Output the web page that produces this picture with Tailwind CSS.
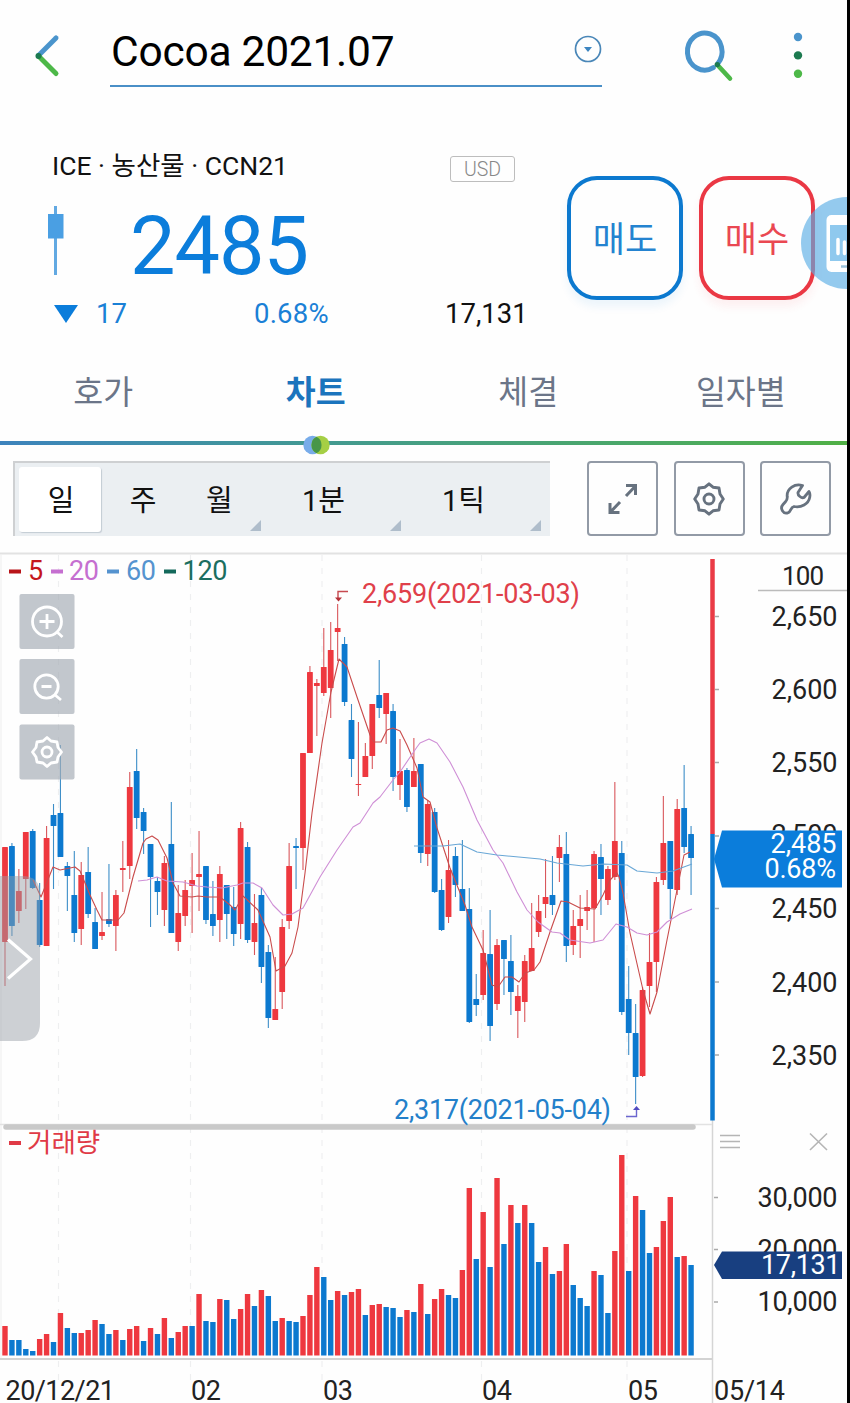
<!DOCTYPE html>
<html lang="ko">
<head>
<meta charset="utf-8">
<meta name="viewport" content="width=device-width, initial-scale=1">
<title>Cocoa 2021.07</title>
<script src="https://cdn.jsdelivr.net/npm/@tailwindcss/browser@4"></script>
</head>
<body class="bg-black">
<div class="relative flex h-[1403px] w-[847px] flex-col overflow-hidden bg-[#fefefe] font-['Roboto','Noto_Sans_CJK_KR',sans-serif] text-[#111]">

  <!-- Title bar -->
  <header class="flex h-[110px] shrink-0 items-start">
    <svg class="ml-[30px] mt-[30px] h-[50px] w-[36px]" viewBox="0 0 36 50" fill="none" stroke-width="5" stroke-linecap="round">
      <path d="M26 8 8.500 25.500" stroke="#4a94cc"/><path d="M8.500 26 26 43.500" stroke="#4db848"/><circle cx="8.500" cy="26" r="3" fill="#1c7a50"/>
    </svg>
    <div class="ml-[44px] flex h-[87px] w-[492px] items-start justify-between border-b-[2.500px] border-[#4a8fc7]">
      <h1 class="mt-[27px] ml-[1px] text-[42.500px] leading-[50px] tracking-[-0.250px] whitespace-nowrap text-black">Cocoa 2021.07</h1>
      <svg class="mt-[35px] h-7 w-7" viewBox="0 0 28 28"><circle cx="14" cy="14" r="12.500" fill="none" stroke="#4a87b8" stroke-width="1.700"/><path d="M10 12h8l-4 5z" fill="#3d85c0"/></svg>
    </div>
    <svg class="ml-[80px] mt-[26px] h-[58px] w-[54px]" viewBox="0 0 54 58" fill="none" stroke-linecap="round">
      <path d="M31.300 41.600A17.300 18.500 0 1 1 35.500 38" stroke="#4a94cc" stroke-width="5"/>
      <path d="M35.500 39 48 52.500" stroke="#4db848" stroke-width="4.600"/><circle cx="35.300" cy="38.600" r="2.700" fill="#1c7a50"/>
    </svg>
    <svg class="ml-[52px] mt-[28px] h-[54px] w-5" viewBox="0 0 20 54"><circle cx="10" cy="9" r="4.200" fill="#4a94cc"/><circle cx="10" cy="27.400" r="4.200" fill="#1c7a50"/><circle cx="10" cy="45.700" r="4.200" fill="#4db848"/></svg>
  </header>

  <!-- Quote summary -->
  <section class="flex h-[240px] shrink-0">
    <div class="w-[567px]">
      <div class="flex h-[92px] items-start">
        <p class="ml-[52px] mt-[40px] w-[398px] text-[26.500px] leading-[32px]">ICE · 농산물 · CCN21</p>
        <span class="mt-[46px] flex h-[26px] w-[65px] items-center justify-center rounded-[3px] border-[1.500px] border-[#bdbdbd] pt-[2px] text-[19.500px] leading-none font-light text-[#888]">USD</span>
      </div>
      <div class="flex h-[96px] items-start text-[#0b7ddb]">
        <svg class="ml-[46px] mt-[4px] h-[69px] w-5" viewBox="0 0 20 69"><path d="M8 0h3v69H8z" fill="#62a9e2"/><path d="M2 8h15.500v24.500H2z" fill="#4a9fe3"/></svg>
        <strong class="mt-[1px] ml-[64px] text-[81px] leading-[88px] font-normal tracking-[-1px]">2485</strong>
      </div>
      <div class="flex h-[32px] items-center text-[27.500px] leading-[32px] text-[#1a80d6]">
        <svg class="ml-[53px] h-[18px] w-[26px]" viewBox="0 0 26 18"><path d="M1 0h24L13 18z" fill="#0b7ddb"/></svg>
        <span class="ml-[17px] w-[158px]">17</span><span class="w-[191px] tracking-[0.200px]">0.68%</span><span class="text-[#111]">17,131</span>
      </div>
    </div>
    <div class="mt-[66px] flex gap-[16px] font-['Noto_Sans_CJK_KR',sans-serif] text-[35px]">
      <button class="h-[124px] w-[116px] rounded-[30px] border-4 border-[#0c79cf] pb-[3px] leading-none text-[#2483d0] shadow-[0_7px_9px_#0c79cf12]">매도</button>
      <button class="h-[124px] w-[116px] rounded-[30px] border-4 border-[#ea3844] pb-[3px] leading-none text-[#ea4852] shadow-[0_7px_9px_#ea384412]">매수</button>
    </div>
  </section>

  <!-- Tabs -->
  <nav class="relative -ml-[3px] grid h-[96px] w-[850px] shrink-0 grid-cols-4 text-center text-[32.500px] leading-[86px] text-[#6b7588]">
    <span>호가</span><span class="font-bold text-[#1b74bd]">차트</span><span>체결</span><span>일자별</span>
    <div class="absolute bottom-[1px] left-0 h-[4px] w-full bg-linear-to-r from-[#3d83bd] via-[#469f82] via-50% to-[#50b045]"></div>
    <svg class="absolute top-[85px] left-[306px] h-5 w-[27px]" viewBox="0 0 27 20"><circle cx="9.500" cy="10" r="9.200" fill="#78acea"/><circle cx="17.500" cy="10" r="9.200" fill="#a5cf45"/><path d="M13.500 1.800a9.200 9.200 0 0 1 0 16.400a9.200 9.200 0 0 1 0-16.400" fill="#489648"/></svg>
  </nav>

  <!-- Period and tools -->
  <section class="flex h-[106px] shrink-0 items-start pt-[15px] pl-[13px]">
    <div class="flex h-[75px] w-[537px] border-t-2 border-l-2 border-[#ced0d2] bg-[#ebeff2] pt-[4px] pl-[4px] text-[29px] leading-[69px]">
      <span class="h-[65px] w-[82px] rounded-[3px] bg-white pl-[2px] text-center shadow-[1px_1px_1px_#c3cbd3]">일</span>
      <span class="w-[82px] pl-[2px] text-center">주</span>
      <span class="relative w-[76px] pl-[23px]">월<i class="absolute right-[-2px] bottom-[5px] h-[11px] w-[11px] bg-[#afbdcb] [clip-path:polygon(100%_0,100%_100%,0_100%)]"></i></span>
      <span class="relative w-[140px] pl-[43px]">1분<i class="absolute right-[-2px] bottom-[5px] h-[11px] w-[11px] bg-[#afbdcb] [clip-path:polygon(100%_0,100%_100%,0_100%)]"></i></span>
      <span class="relative w-[140px] pl-[43px]">1틱<i class="absolute right-[-2px] bottom-[5px] h-[11px] w-[11px] bg-[#afbdcb] [clip-path:polygon(100%_0,100%_100%,0_100%)]"></i></span>
    </div>
    <div class="ml-[37px] flex gap-[15.500px] text-[#67727f]">
      <div class="flex h-[75px] w-[71px] items-center justify-center rounded-[4px] border-2 border-[#929aa6]">
        <svg class="h-8 w-8" viewBox="0 0 32 32" fill="none" stroke="currentColor" stroke-width="3"><path d="M19 13 28.500 3M19 2.500h9.500v9.500M13 19 3.500 29M3 20v9.500h9.500"/></svg>
      </div>
      <div class="flex h-[75px] w-[71px] items-center justify-center rounded-[4px] border-2 border-[#929aa6]">
        <svg class="h-[34px] w-8" viewBox="0 0 32 34" fill="none" stroke="currentColor" stroke-width="2.900" stroke-linejoin="round"><path d="M16 1.800 20 5.200 26 6 27 12 30.300 17 27 22 26 28 20 28.800 16 32.200 12 28.800 6 28 5 22 1.700 17 5 12 6 6 12 5.200Z"/><circle cx="16" cy="17" r="5"/></svg>
      </div>
      <div class="flex h-[75px] w-[71px] items-center justify-center rounded-[4px] border-2 border-[#929aa6]">
        <svg class="h-8 w-8" viewBox="0 0 32 32" fill="none" stroke="currentColor" stroke-width="2.800" stroke-linejoin="round"><path d="M22.500 2.500C15 0 6.500 5.500 7.200 13.500C7.500 16 7.200 17 5.500 18.700L3 21.500C-.5 25.500 3.500 32 8.500 29.500C11 28 10.500 24.500 14 23.500C21 25 28.500 21 29.700 14.500C30.200 12 30 10 29 8.500L24 14.500C21.500 15.500 17.500 12.500 18 9.500Z"/></svg>
      </div>
    </div>
  </section>

  <!-- Price and volume chart; plot units are screen pixels -->
  <main class="h-[851px] shrink-0">
    <svg class="block h-[851px] w-[847px]" viewBox="0 552 847 851" font-size="27" fill="#222">
      <path d="M0 553.500H847" stroke="#e2e2e2" stroke-width="2"/>
      <path d="M1 555V1358" stroke="#eee"/>
      <path d="M58.500 555V1380M190.500 555V1380M322 555V1380M481.500 555V1380M627 555V1380" stroke="#eeeff0" stroke-width="1.200" stroke-dasharray="6 7"/>
      <path d="M712.500 1120V1403" stroke="#d5d5d5" stroke-width="1.500"/>
      <path d="M0 1359H712" stroke="#d3d3d3" stroke-width="2"/>
      <path d="M0 1124.500H712" stroke="#e2e2e2" stroke-width="1.500"/>
      <path d="M6 1127H693" stroke="#c9c9c9" stroke-width="5.500" stroke-linecap="round"/>
      <g id="candles"></g>
      <g fill="none" stroke-width="1.100" stroke-linejoin="round">
        <path stroke="#c94b4b" d="M33 880 41 897 53 867 60 870 75 867 80 871 90 895 97 910 102 920H118L124 913 133 877 143 843 146 839 152 836 158 840 167 858 173 883 180 896 192 897 198 896 207 897 220 897 230 905 235 910 243 896 258 910 270 937 276 971 285 966 292 953 298 927 305 873 312 813 322 743 331 692 339 659 347 667 357 697 370 735 374 742 381 742 387 730 393 728 400 731 407 745 417 768 423 797 430 802 437 828 450 868 465 905 472 927 483 950 492 985 498 987 505 977 512 977 519 982 525 973 534 970 540 962 550 932 561 901 568 902 580 908 595 909 603 895 610 880 617 873 619 877 623 893 630 933 643 990 650 1014 657 992 667 940 677 890 684 855 690 852"/>
        <path stroke="#cf8fd6" d="M138 881 147 880 157 877 167 881 183 882 197 886 207 887 222 888 237 885 243 883 253 883 262 888 273 905 283 915 292 914 303 908 320 877 337 850 353 827 360 823 373 803 380 797 393 780 400 772 417 747 420 743 429 739 437 743 450 762 463 787 477 820 493 850 503 863 517 892 527 910 538 922 552 932 560 933 570 940 590 943 603 940 616 924 627 927 637 933 647 935 657 932 667 922 680 914 692 909"/>
        <path stroke="#69a7d6" d="M414 846H443L460 844 477 852 497 855 540 859 557 863 583 866 603 864 627 865 637 871 657 873 673 871 692 864"/>
      </g>
      <g id="volumes"></g>

      <g stroke-width="4"><path d="M9 571.500h12" stroke="#b81419"/><path d="M51 571.500h12" stroke="#c56fd0"/><path d="M107 571.500h12" stroke="#5593cf"/><path d="M164 571.500h12" stroke="#14695b"/><path d="M9 1143h12" stroke="#e03a46"/></g>
      <text x="28" y="580" fill="#c4161c" textLength="14.500">5</text><text x="69" y="580" fill="#c56fd0" textLength="30">20</text><text x="126" y="580" fill="#5593cf" textLength="30">60</text><text x="182.500" y="580" fill="#1b6e60" textLength="45">120</text>
      <text x="27" y="1151.500" fill="#e03a46" font-size="26.500">거래량</text>
      <text x="362" y="603" fill="#e0404a" textLength="218">2,659(2021-03-03)</text>
      <text x="394" y="1118.500" fill="#2380ca" textLength="217">2,317(2021-05-04)</text>
      <path d="M348 591.500h-10v8" stroke="#c74a50" stroke-width="1.400" fill="none"/><path d="M335 597.500h7l-3.500 4z" fill="#b53038"/>
      <path d="M626 1116.500h10.500v-8" stroke="#6b66cf" stroke-width="1.400" fill="none"/><path d="M633 1110h7l-3.500-4z" fill="#514bc0"/>

      <path d="M712.500 559V834" stroke="#ea3b46" stroke-width="4.500"/><path d="M712.500 834V1120.500" stroke="#0c79cf" stroke-width="4.500"/>
      <path d="M715 616.500h4M715 689.500h4M715 762.500h4M715 836h4M715 908.500h4M715 982h4M715 1055h4M714 1197.500h4M714 1249.500h4M714 1302h4" stroke="#aaa" stroke-width="1.500"/>
      <path d="M758 590.500h89" stroke="#bbb" stroke-width="1.500"/>
      <text x="782" y="584.500" font-size="26" textLength="42">100</text>
      <g>
        <text x="771.500" y="625.500" textLength="66">2,650</text><text x="771.500" y="698.500" textLength="66">2,600</text><text x="771.500" y="771.500" textLength="66">2,550</text><text x="771.500" y="844" textLength="66">2,500</text><text x="771.500" y="918" textLength="66">2,450</text><text x="771.500" y="991.500" textLength="66">2,400</text><text x="771.500" y="1064.500" textLength="66">2,350</text>
        <text x="757.500" y="1206.500" textLength="80">30,000</text><text x="757.500" y="1258.500" textLength="80">20,000</text><text x="757.500" y="1311" textLength="80">10,000</text>
        <path d="M714 859 722 830.500H842V887.500H722Z" fill="#0b7ddb"/>
        <path d="M714 1265 722 1251.500H842V1279H722Z" fill="#183f80"/>
        <g fill="#fff"><text x="770.500" y="853" textLength="66">2,485</text><text x="764.500" y="877.500" textLength="71.500">0.68%</text><text x="761" y="1273.500" textLength="79.500">17,131</text></g>
      </g>
      <path d="M720 1135.500h20M720 1141.500h20M720 1147.500h20M810 1133.500l17 16.500M827 1133.500l-17 16.500" stroke="#b5b5b5" stroke-width="1.600"/>
      <text x="5.500" y="1400" textLength="109.500">20/12/21</text><text x="191" y="1400" textLength="30">02</text><text x="323" y="1400" textLength="30">03</text><text x="482" y="1400" textLength="30">04</text><text x="628" y="1400" textLength="30">05</text><text x="714" y="1400" textLength="71">05/14</text>

      <!-- On-chart controls -->
      <g fill="#a5acb5" fill-opacity=".68"><rect x="19.500" y="594" width="55" height="55" rx="2"/><rect x="19.500" y="659" width="55" height="55" rx="2"/><rect x="19.500" y="724.500" width="55" height="55" rx="2"/></g>
      <path d="M0 876H22Q40 876 40 894V1023Q40 1041 22 1041H0Z" fill="#999ea8" fill-opacity=".48"/>
      <g fill="none" stroke="#fff" stroke-width="2.800" stroke-linejoin="round">
        <circle cx="47" cy="621.500" r="14.500"/><path d="M39.500 621.500h15M47 614v15M57 632l5.500 5"/>
        <circle cx="46.500" cy="686.500" r="11.700"/><path d="M41.500 686.500h10M54.500 694.500l6.500 5.500"/>
        <path d="M47 737.500 51 741 57 742 58 747.500 61.500 752 58 757 57 762 51 763 47 766.500 43 763 37 762 36 757 32.500 752 36 747.500 37 742 43 741Z"/><circle cx="47" cy="752" r="5"/>
        <path d="M8 939.500 30.500 959 8 978.500" stroke-width="3.200" stroke-linejoin="miter"/>
      </g>
    </svg>
  </main>

  <!-- Floating shortcut, partly off the right edge -->
  <svg class="absolute top-[196px] left-[800px] h-[94px] w-[47px]" viewBox="0 0 47 94">
    <circle cx="47" cy="47" r="46" fill="#5aaee5" fill-opacity=".65"/>
    <rect x="26.500" y="19" width="40" height="57" rx="5" fill="#fff"/><path d="M30 29h20v36H30z" fill="#8fc9ee"/><path d="M38 43.500v14M44.500 46v11.500" stroke="#fff" stroke-width="3.500" stroke-linecap="round"/><path d="M41 70.500h10" stroke="#9cc4dd" stroke-width="2.500"/>
  </svg>
</div>

<script>
  // side, high, body top, body bottom, low, volume top
  const days = `R 847 847 942 986 1326|B 843 846 926 936 1340|R 869 891 911 923 1340|R 832 832 879 909 1349|B 829 831 888 889 1351|B 883 900 945 947 1339|R 826 838 946 946 1334|B 804 815 826 889 1342|B 745 813 857 857 1313|B 862 866 876 911 1328|B 851 895 933 942 1333|R 862 875 929 945 1333|B 847 872 914 918 1330|B 908 922 949 949 1320|R 892 932 936 940 1324|B 864 919 924 927 1334|R 890 895 926 951 1330|R 841 868 870 892 1340|R 772 787 866 879 1329|B 749 771 818 829 1326|B 808 812 831 854 1341|B 844 844 877 927 1328|B 877 881 892 915 1334|R 856 863 910 926 1318|B 802 844 933 933 1338|R 885 913 942 951 1332|R 880 890 916 926 1326|R 853 880 886 933 1326|R 831 874 877 911 1294|B 866 866 920 924 1321|B 881 914 926 936 1322|R 866 874 920 942 1299|B 885 885 914 939 1300|B 887 907 934 946 1319|R 822 828 924 939 1309|B 842 847 940 943 1294|R 894 923 942 955 1306|B 888 895 967 983 1290|B 945 952 1018 1028 1296|R 957 1009 1020 1020 1321|R 919 927 992 1009 1318|R 843 866 921 929 1321|B 838 846 848 889 1322|R 753 753 848 870 1316|R 666 672 753 753 1295|R 679 683 686 736 1267|R 628 667 693 696 1277|R 622 650 688 718 1300|R 604 628 632 661 1291|B 637 644 702 706 1295|B 704 720 759 777 1292|R 722 784 785 796 1289|R 743 756 777 777 1315|R 704 704 756 769 1305|B 660 695 708 718 1304|R 693 693 714 744 1307|B 704 711 777 791 1308|R 739 771 785 800 1317|B 768 770 807 812 1310|R 738 771 787 787 1312|B 764 764 853 863 1284|R 800 804 854 866 1314|B 808 812 892 893 1299|B 879 890 930 931 1289|R 840 870 917 923 1295|B 847 856 885 897 1298|B 840 889 911 911 1270|B 888 909 1022 1023 1188|B 974 999 1005 1016 1259|R 930 953 995 1000 1212|B 910 954 1026 1041 1267|R 939 945 1004 1010 1178|B 940 940 959 995 1244|B 935 961 992 1015 1205|R 985 996 1011 1038 1223|R 955 961 1002 1022 1205|R 903 948 971 971 1223|R 895 911 932 937 1262|R 859 897 904 918 1247|B 856 895 905 915 1274|R 835 847 858 882 1271|B 832 854 946 962 1244|R 910 926 945 955 1285|R 895 919 926 958 1298|R 890 907 911 930 1306|R 851 854 908 942 1271|B 844 857 879 915 1275|R 866 869 900 905 1313|R 782 841 877 880 1251|B 841 853 1012 1015 1155|B 966 999 1033 1055 1271|B 1004 1033 1077 1104 1196|R 987 990 1076 1077 1210|R 933 962 986 1007 1253|R 877 882 962 992 1247|R 796 843 880 885 1221|B 841 841 889 919 1197|R 799 809 890 895 1257|B 765 808 847 853 1256|B 826 834 858 895 1265`.split('|').map(d => d.split(' '));
  const volumeSides = 'RBBBBRRBRBBRRRBBRBRRBRBRBRRBRBBRBBRRBRBBRBBRRRBBRBRRBRRBBBRBRBRRBBRRBRBRBRBRBBRBRRBBBRBBRRBRBBRRRBRB';
  const fill = s => s === 'R' ? '#ee383f' : '#0c79cf';
  const line = s => s === 'R' ? '#d9575c' : '#3d8ec8';
  let candles = '', volumes = '';
  days.forEach(([side, high, top, bottom, low, vol], i) => {
    const x = 5 + i * 6.93;
    candles += `<path d="M${x} ${high}V${low}" stroke="${line(side)}" stroke-width="1.1"/><rect x="${x - 2.9}" y="${top}" width="5.8" height="${bottom - top}" rx=".5" fill="${fill(side)}"/>`;
    volumes += `<rect x="${x - 2.7}" y="${vol}" width="5.4" height="${1355.5 - vol}" fill="${fill(volumeSides[i])}"/>`;
  });
  document.getElementById('candles').innerHTML = candles;
  document.getElementById('volumes').innerHTML = volumes;
</script>
</body>
</html>
